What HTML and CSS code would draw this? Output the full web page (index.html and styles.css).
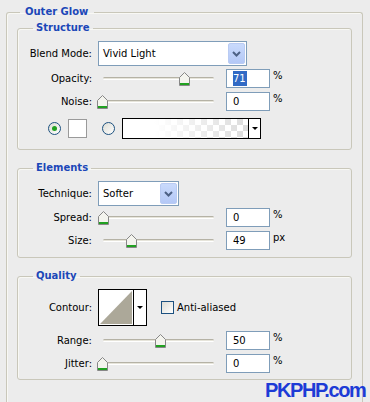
FILE: index.html
```html
<!DOCTYPE html>
<html lang="en">
<head>
    <meta charset="UTF-8">
    <title>Outer Glow</title>
    <link rel="stylesheet" href="styles.css">
</head>
<body>
    <fieldset class="group outer">
        <legend>Outer Glow</legend>

        <fieldset class="group section structure">
            <legend>Structure</legend>
            <div class="row tall">
                <span class="label">Blend Mode:</span>
                <div class="select blend">
                    <span class="select-text">Vivid Light</span>
                    <span class="drop"><svg width="9" height="6" viewBox="0 0 9 6"><polyline points="1,1 4.5,4.5 8,1" fill="none" stroke="#4d6185" stroke-width="2"/></svg></span>
                </div>
            </div>
            <div class="row">
                <span class="label">Opacity:</span>
                <div class="slider"><div class="track"></div><span class="thumb" style="left: 82px"></span></div>
                <div class="field"><span class="picked">71</span></div><span class="unit">%</span>
            </div>
            <div class="row gap4">
                <span class="label">Noise:</span>
                <div class="slider"><div class="track"></div><span class="thumb" style="left: 0px"></span></div>
                <div class="field">0</div><span class="unit">%</span>
            </div>
            <div class="row colors">
                <span class="radio checked"></span>
                <span class="swatch"></span>
                <span class="radio second"></span>
                <div class="gradient">
                    <span class="grad-fill"></span>
                    <span class="grad-arrow"></span>
                </div>
            </div>
        </fieldset>

        <fieldset class="group section elements">
            <legend>Elements</legend>
            <div class="row tall">
                <span class="label">Technique:</span>
                <div class="select technique">
                    <span class="select-text">Softer</span>
                    <span class="drop"><svg width="9" height="6" viewBox="0 0 9 6"><polyline points="1,1 4.5,4.5 8,1" fill="none" stroke="#4d6185" stroke-width="2"/></svg></span>
                </div>
            </div>
            <div class="row gap2">
                <span class="label">Spread:</span>
                <div class="slider"><div class="track"></div><span class="thumb" style="left: 1px"></span></div>
                <div class="field">0</div><span class="unit">%</span>
            </div>
            <div class="row gap4">
                <span class="label">Size:</span>
                <div class="slider"><div class="track"></div><span class="thumb" style="left: 29px"></span></div>
                <div class="field">49</div><span class="unit">px</span>
            </div>
        </fieldset>

        <fieldset class="group section quality">
            <legend>Quality</legend>
            <div class="row contour-row">
                <span class="label">Contour:</span>
                <div class="contour">
                    <svg class="curve" width="34" height="35" viewBox="0 0 34 35">
                        <rect width="34" height="35" fill="#fff"/>
                        <polygon points="1,34 33,1 33,34" fill="#aca899"/>
                    </svg>
                    <span class="grad-arrow"></span>
                </div>
                <span class="check"></span>
                <span class="check-label">Anti-aliased</span>
            </div>
            <div class="row gap5">
                <span class="label">Range:</span>
                <div class="slider"><div class="track"></div><span class="thumb" style="left: 58px"></span></div>
                <div class="field">50</div><span class="unit">%</span>
            </div>
            <div class="row gap4">
                <span class="label">Jitter:</span>
                <div class="slider"><div class="track"></div><span class="thumb" style="left: 0px"></span></div>
                <div class="field">0</div><span class="unit">%</span>
            </div>
        </fieldset>
    </fieldset>

    <div class="watermark">PKPHP.com</div>
</body>
</html>
```

FILE: styles.css
```css
body {
    margin: 0;
    padding: 6px 0 0 0;
    height: 396px;
    overflow: hidden;
    background: #ececec;
    font-family: 'DejaVu Sans', sans-serif;
    font-size: 10px;
    color: #000;
    position: relative;
}
.group {
    margin: 0;
    padding: 0;
    border: 1px solid #c9c7ba;
    border-radius: 3px;
    box-shadow: inset 1px 1px 0 #f8f8f4;
    min-width: 0;
}
.group legend {
    font-weight: bold;
    color: #1b47b8;
    line-height: 12px;
    height: 12px;
}
.outer {
    margin-left: 6px;
    width: 357px;
    box-sizing: border-box;
    padding-top: 4px;
    height: 396px;
    border-bottom: none;
    border-radius: 3px 3px 0 0;
}
.outer > legend {
    margin-left: 13px;
    padding: 0 6px 0 5px;
}
.section {
    margin-left: 10px;
    width: 335px;
    box-sizing: border-box;
    padding: 7px 0 0 0;
}
.section legend {
    margin-left: 15px;
    padding: 0 3px;
}
.structure {
    padding-bottom: 10px;
}
.elements {
    margin-top: 12px;
    padding-bottom: 7px;
}
.quality {
    margin-top: 12px;
    padding-bottom: 6px;
}
.row {
    display: flex;
    align-items: center;
    height: 19px;
    margin-top: 3px;
}
.row.tall {
    height: 25px;
    margin-top: 0;
}
.row.gap2 { margin-top: 2px; }
.row.gap4 { margin-top: 4px; }
.row.gap5 { margin-top: 5px; }
.label {
    width: 74px;
    text-align: right;
    margin-right: 5px;
    flex: none;
}
.tall .label,
.contour-row .label {
    margin-right: 6px;
}
.select {
    height: 25px;
    box-sizing: border-box;
    border: 1px solid #7f9db9;
    background: #fff;
    display: flex;
    align-items: center;
    padding: 1px;
}
.blend { width: 149px; }
.technique { width: 81px; }
.select-text {
    flex: 1;
    padding-left: 3px;
}
.drop {
    width: 17px;
    height: 21px;
    box-sizing: border-box;
    border: 1px solid #b9cbf3;
    border-radius: 2px;
    background: linear-gradient(#c9dafc, #b4c8f6);
    display: flex;
    align-items: center;
    justify-content: center;
}
.slider {
    position: relative;
    width: 120px;
    height: 19px;
    margin-right: 9px;
    flex: none;
}
.track {
    position: absolute;
    left: 6px;
    width: 111px;
    top: 8px;
    height: 1px;
    border-top: 1px solid #b5b2a5;
    border-bottom: 1px solid #fff;
    background: #e6e4da;
    border-radius: 2px;
}
.thumb {
    position: absolute;
    top: 3px;
    width: 11px;
    height: 14px;
    background: url("data:image/svg+xml,%3Csvg xmlns='http://www.w3.org/2000/svg' width='11' height='14'%3E%3Cpolygon points='0.5,5.5 5.5,0.5 10.5,5.5 10.5,13.5 0.5,13.5' fill='%23f4f4ee' stroke='%23878787'/%3E%3Crect x='1' y='11' width='9' height='2' fill='%2321a121'/%3E%3C/svg%3E") no-repeat;
}
.field {
    width: 44px;
    height: 19px;
    box-sizing: border-box;
    border: 1px solid #7f9db9;
    background: #fff;
    padding-left: 6px;
    display: flex;
    align-items: center;
    flex: none;
}
.picked {
    background: #316ac5;
    color: #fff;
    line-height: 15px;
    padding-right: 1px;
}
.unit {
    align-self: flex-start;
    margin-left: 3px;
    line-height: 14px;
}
.colors {
    height: 21px;
    margin-top: 7px;
    padding-left: 30px;
}
.radio {
    width: 13px;
    height: 13px;
    box-sizing: border-box;
    border: 1px solid #1c5180;
    border-radius: 50%;
    background: linear-gradient(135deg, #dcdcd4, #fff);
    position: relative;
    flex: none;
}
.radio.checked::after {
    content: "";
    position: absolute;
    left: 3px;
    top: 3px;
    width: 5px;
    height: 5px;
    border-radius: 50%;
    background: #21a121;
}
.swatch {
    width: 19px;
    height: 19px;
    box-sizing: border-box;
    border: 1px solid #9a9a9a;
    background: #fff;
    margin-left: 7px;
    flex: none;
}
.radio.second {
    margin-left: 15px;
}
.gradient {
    width: 139px;
    height: 21px;
    box-sizing: border-box;
    border: 1px solid #000;
    margin-left: 7px;
    display: flex;
}
.grad-fill {
    flex: 1;
    background:
        linear-gradient(to right, #fff 0%, #fff 25%, rgba(255, 255, 255, 0) 100%),
        repeating-conic-gradient(#dcdcdc 0 25%, #fff 0 50%) 0 0 / 12px 12px;
}
.grad-arrow {
    width: 11px;
    border-left: 1px solid #000;
    background: #fff;
    display: flex;
    align-items: center;
    justify-content: center;
}
.grad-arrow::after {
    content: "";
    border-left: 3px solid transparent;
    border-right: 3px solid transparent;
    border-top: 3px solid #000;
}
.contour-row {
    height: 37px;
    margin-top: 0;
}
.contour {
    width: 49px;
    height: 37px;
    box-sizing: border-box;
    border: 1px solid #000;
    display: flex;
}
.curve {
    display: block;
}
.contour .grad-arrow {
    width: 12px;
}
.check {
    width: 13px;
    height: 13px;
    box-sizing: border-box;
    border: 1px solid #1c5180;
    background: linear-gradient(135deg, #dcdcd4, #fff);
    margin-left: 14px;
    flex: none;
}
.check-label {
    margin-left: 3px;
}
.watermark {
    position: absolute;
    left: 265px;
    top: 379px;
    font-family: 'Liberation Sans', Arial, sans-serif;
    font-weight: bold;
    font-size: 20px;
    letter-spacing: -1.4px;
    color: #1d3bd6;
}
```
